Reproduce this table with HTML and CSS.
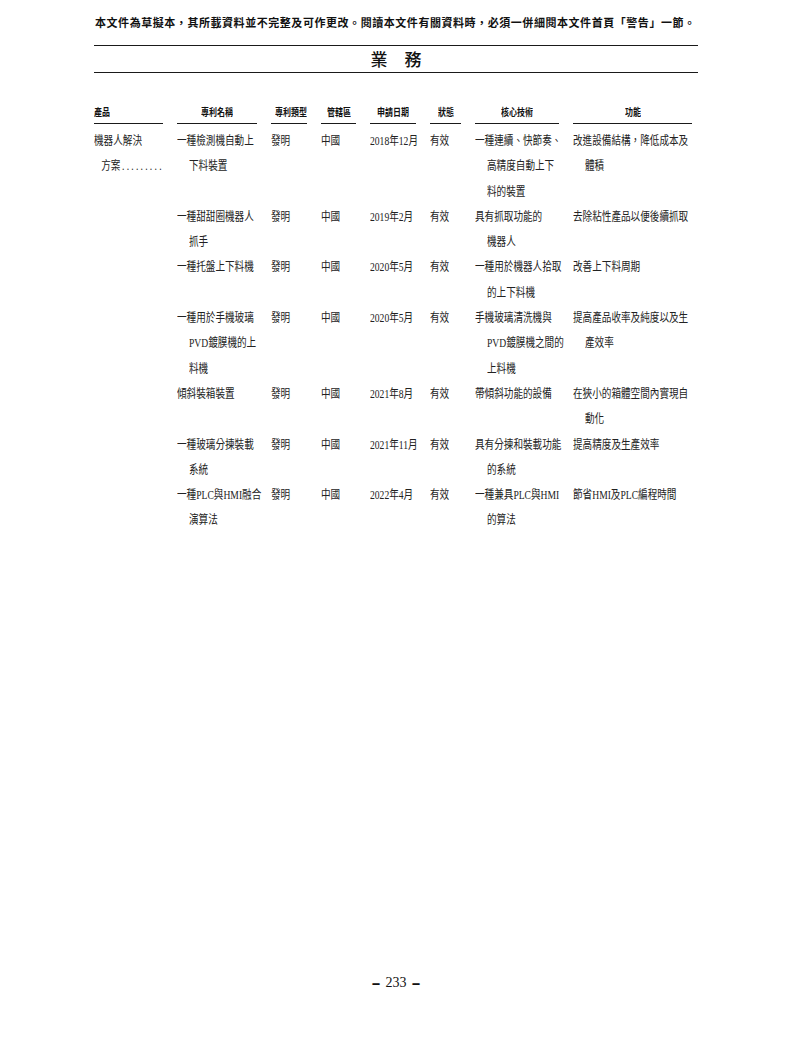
FILE: index.html
```html
<!DOCTYPE html>
<html lang="zh-Hant">
<head>
<meta charset="utf-8">
<title>業務</title>
<link rel="stylesheet" href="styles.css">
</head>
<body>
<div class="page">
  <div class="notice">本文件為草擬本，其所載資料並不完整及可作更改。閱讀本文件有關資料時，必須一併細閱本文件首頁「警告」一節。</div>
  <div class="title-bar">業　務</div>

  <div class="grid">
    <div class="th left"><span>產品</span></div>
    <div class="th"><span>專利名稱</span></div>
    <div class="th"><span>專利類型</span></div>
    <div class="th"><span>管轄區</span></div>
    <div class="th"><span>申請日期</span></div>
    <div class="th"><span>狀態</span></div>
    <div class="th"><span>核心技術</span></div>
    <div class="th"><span>功能</span></div>

    <!-- row 1 -->
    <div class="td"><div class="l">機器人解決</div><div class="l i1">方案<span class="dots">.........</span></div></div>
    <div class="td"><div class="l">一種檢測機自動上</div><div class="l i">下料裝置</div></div>
    <div class="td"><div class="l">發明</div></div>
    <div class="td"><div class="l">中國</div></div>
    <div class="td"><div class="l">2018年12月</div></div>
    <div class="td"><div class="l">有效</div></div>
    <div class="td"><div class="l">一種連續、快節奏、</div><div class="l i">高精度自動上下</div><div class="l i">料的裝置</div></div>
    <div class="td"><div class="l">改進設備結構，降低成本及</div><div class="l i">體積</div></div>

    <!-- row 2 -->
    <div class="td"></div>
    <div class="td"><div class="l">一種甜甜圈機器人</div><div class="l i">抓手</div></div>
    <div class="td"><div class="l">發明</div></div>
    <div class="td"><div class="l">中國</div></div>
    <div class="td"><div class="l">2019年2月</div></div>
    <div class="td"><div class="l">有效</div></div>
    <div class="td"><div class="l">具有抓取功能的</div><div class="l i">機器人</div></div>
    <div class="td"><div class="l">去除粘性產品以便後續抓取</div></div>

    <!-- row 3 -->
    <div class="td"></div>
    <div class="td"><div class="l">一種托盤上下料機</div></div>
    <div class="td"><div class="l">發明</div></div>
    <div class="td"><div class="l">中國</div></div>
    <div class="td"><div class="l">2020年5月</div></div>
    <div class="td"><div class="l">有效</div></div>
    <div class="td"><div class="l">一種用於機器人拾取</div><div class="l i">的上下料機</div></div>
    <div class="td"><div class="l">改善上下料周期</div></div>

    <!-- row 4 -->
    <div class="td"></div>
    <div class="td"><div class="l">一種用於手機玻璃</div><div class="l i">PVD鍍膜機的上</div><div class="l i">料機</div></div>
    <div class="td"><div class="l">發明</div></div>
    <div class="td"><div class="l">中國</div></div>
    <div class="td"><div class="l">2020年5月</div></div>
    <div class="td"><div class="l">有效</div></div>
    <div class="td"><div class="l">手機玻璃清洗機與</div><div class="l i">PVD鍍膜機之間的</div><div class="l i">上料機</div></div>
    <div class="td"><div class="l">提高產品收率及純度以及生</div><div class="l i">產效率</div></div>

    <!-- row 5 -->
    <div class="td"></div>
    <div class="td"><div class="l">傾斜裝箱裝置</div></div>
    <div class="td"><div class="l">發明</div></div>
    <div class="td"><div class="l">中國</div></div>
    <div class="td"><div class="l">2021年8月</div></div>
    <div class="td"><div class="l">有效</div></div>
    <div class="td"><div class="l">帶傾斜功能的設備</div></div>
    <div class="td"><div class="l">在狹小的箱體空間內實現自</div><div class="l i">動化</div></div>

    <!-- row 6 -->
    <div class="td"></div>
    <div class="td"><div class="l">一種玻璃分揀裝載</div><div class="l i">系統</div></div>
    <div class="td"><div class="l">發明</div></div>
    <div class="td"><div class="l">中國</div></div>
    <div class="td"><div class="l">2021年11月</div></div>
    <div class="td"><div class="l">有效</div></div>
    <div class="td"><div class="l">具有分揀和裝載功能</div><div class="l i">的系統</div></div>
    <div class="td"><div class="l">提高精度及生產效率</div></div>

    <!-- row 7 -->
    <div class="td"></div>
    <div class="td"><div class="l">一種PLC與HMI融合</div><div class="l i">演算法</div></div>
    <div class="td"><div class="l">發明</div></div>
    <div class="td"><div class="l">中國</div></div>
    <div class="td"><div class="l">2022年4月</div></div>
    <div class="td"><div class="l">有效</div></div>
    <div class="td"><div class="l">一種兼具PLC與HMI</div><div class="l i">的算法</div></div>
    <div class="td"><div class="l">節省HMI及PLC編程時間</div></div>
  </div>

  <div class="footer"><span class="dash">–</span><span class="num">233</span><span class="dash">–</span></div>
</div>
</body>
</html>
```
FILE: styles.css
```css
html, body {
  margin: 0;
  padding: 0;
  background: #ffffff;
}

body {
  font-family: "Liberation Serif", "Noto Sans CJK TC", serif;
  color: #222222;
}

.page {
  box-sizing: border-box;
  min-height: 1058px;
  width: 604px;
  margin-left: 94px;
  padding-top: 16px;
  display: flex;
  flex-direction: column;
}

.notice {
  font-family: "Liberation Serif", "Noto Sans CJK TC", serif;
  font-size: 11px;
  font-weight: bold;
  line-height: 14px;
  letter-spacing: 0.55px;
  white-space: nowrap;
  color: #111111;
  padding-left: 1px;
}

.title-bar {
  margin-top: 15px;
  border-top: 1px solid #1a1a1a;
  border-bottom: 1px solid #1a1a1a;
  text-align: center;
  font-family: "Noto Sans CJK TC", sans-serif;
  font-size: 17px;
  font-weight: 500;
  line-height: 26px;
  color: #111111;
}

.grid {
  margin-top: 33px;
  display: grid;
  grid-template-columns: 69px 80px 36px 35px 46px 31px 84px 119px;
  column-gap: 14px;
}

.th {
  font-size: 10px;
  font-weight: bold;
  line-height: 14px;
  padding-bottom: 3px;
  border-bottom: 1px solid #1a1a1a;
  margin-bottom: 5px;
  text-align: center;
  color: #111111;
  white-space: nowrap;
}

.th span {
  display: inline-block;
  transform: scaleX(0.8);
  transform-origin: 50% 50%;
}

.th.left {
  text-align: left;
}

.th.left span {
  transform-origin: 0 50%;
}

.td {
  font-size: 12px;
  line-height: 25.3px;
}

.l {
  white-space: nowrap;
  transform: scaleX(0.8);
  transform-origin: 0 50%;
}

.l.i {
  padding-left: 15px;
}

.l.i1 {
  padding-left: 9px;
}

.dots {
  letter-spacing: 2.8px;
  margin-left: 2px;
}

.footer {
  margin-top: auto;
  margin-bottom: 65px;
  display: flex;
  justify-content: center;
  align-items: center;
  gap: 6px;
  font-family: "Liberation Serif", serif;
  font-size: 14px;
  line-height: 20px;
  color: #111111;
}

.footer .dash {
  font-weight: bold;
  display: inline-block;
  transform: scaleY(1.8);
}
```
